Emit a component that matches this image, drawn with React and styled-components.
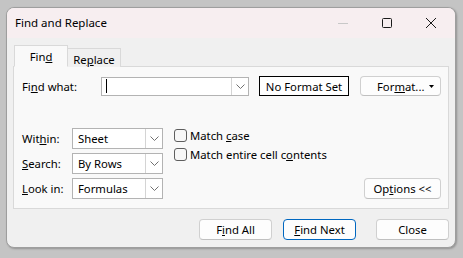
import React from "react";
import styled, { createGlobalStyle } from "styled-components";

const Global = createGlobalStyle`
  html, body {
    margin: 0;
    padding: 0;
    background: #c4c4c4;
    width: 463px;
    height: 258px;
    overflow: hidden;
  }
  body {
    font-family: "Noto Sans", "Segoe UI", sans-serif;
    font-size: 11.3px;
    color: #000;
  }
`;

const Stage = styled.div`
  padding: 7px 0 0 6px;
`;

const Window = styled.div`
  width: 448px;
  height: 239px;
  border: 1px solid #9e9e9e;
  border-radius: 8px;
  background: #f0f0f0;
  overflow: hidden;
  box-shadow: 1px 1px 2px rgba(0, 0, 0, 0.25);
  display: flex;
  flex-direction: column;
`;

const TitleBar = styled.div`
  height: 30px;
  background: #f7eef0;
  display: flex;
  align-items: center;
  padding: 0 2px 0 8px;
`;

const Title = styled.div`
  flex: 1;
  line-height: 30px;
  font-size: 11.5px;
`;

const CapButton = styled.div`
  width: 44px;
  height: 30px;
  display: flex;
  align-items: center;
  justify-content: center;
`;

const Body = styled.div`
  padding: 7px 6px 0 6px;
  display: flex;
  flex-direction: column;
`;

const TabRow = styled.div`
  display: flex;
  align-items: flex-end;
  height: 22px;
  padding-left: 1px;
  position: relative;
  z-index: 1;
`;

const Tab = styled.div`
  width: ${(p) => (p.$active ? "54px" : "53px")};
  height: ${(p) => (p.$active ? "22px" : "19px")};
  box-sizing: border-box;
  border: 1px solid #d9d9d9;
  border-bottom: ${(p) => (p.$active ? "1px solid #f9f9f9" : "none")};
  border-left: ${(p) => (p.$active ? "1px solid #d9d9d9" : "none")};
  background: ${(p) => (p.$active ? "#f9f9f9" : "#f0f0f0")};
  display: flex;
  align-items: center;
  justify-content: center;
  padding-top: ${(p) => (p.$active ? "0" : "2px")};
`;

const Panel = styled.div`
  margin-top: -1px;
  height: 143px;
  border: 1px solid #d9d9d9;
  background: #f9f9f9;
  box-sizing: border-box;
  padding: 9px 7px 0 8px;
  display: flex;
  flex-direction: column;
`;

const FindRow = styled.div`
  display: flex;
  align-items: center;
  height: 20px;
`;

const Label = styled.div`
  width: ${(p) => p.$w || "50px"};
  flex: none;
`;

const Combo = styled.div`
  width: ${(p) => p.$w}px;
  height: ${(p) => p.$h}px;
  box-sizing: border-box;
  border: 1px solid #b3b3b3;
  background: #fff;
  display: flex;
  align-items: center;
  flex: none;
`;

const ComboText = styled.div`
  flex: 1;
  padding-left: 5px;
  display: flex;
  align-items: center;
`;

const Caret = styled.div`
  width: 1px;
  height: 14px;
  background: #000;
  margin-left: -1px;
`;

const Arrow = styled.div`
  width: 16px;
  align-self: stretch;
  border-left: 1px solid #d4d4d4;
  display: flex;
  align-items: center;
  justify-content: center;
`;

const FormatBox = styled.div`
  margin-left: 10px;
  width: 90px;
  height: 20px;
  box-sizing: border-box;
  border: 1px solid #000;
  background: #fff;
  display: flex;
  align-items: center;
  justify-content: center;
`;

const Button = styled.div`
  width: ${(p) => p.$w}px;
  height: ${(p) => p.$h || 21}px;
  box-sizing: border-box;
  border: 1px solid ${(p) => (p.$primary ? "#0067c0" : "#d0d0d0")};
  border-bottom-color: ${(p) => (p.$primary ? "#0067c0" : "#c0c0c0")};
  border-radius: 4px;
  background: #fdfdfd;
  display: flex;
  align-items: center;
  justify-content: center;
  flex: none;
  margin-left: ${(p) => p.$gap || 0}px;
`;

const FormatButton = styled(Button)`
  margin-left: 11px;
  justify-content: space-between;
  padding: 0 6px 0 16px;
`;

const Options = styled.div`
  margin-top: 32px;
  display: flex;
`;

const Column = styled.div`
  display: flex;
  flex-direction: column;
  gap: 4px;
`;

const SelectRow = styled.div`
  display: flex;
  align-items: center;
`;

const Checks = styled.div`
  margin-left: 11px;
  display: flex;
  flex-direction: column;
  gap: 6px;
  padding-top: 1px;
`;

const CheckRow = styled.div`
  display: flex;
  align-items: center;
  gap: 3px;
  height: 13px;
`;

const Box = styled.div`
  width: 13px;
  height: 13px;
  box-sizing: border-box;
  border: 1px solid #5e5e5e;
  border-radius: 3px;
  background: #f7f7f7;
`;

const Right = styled.div`
  flex: 1;
  display: flex;
  justify-content: flex-end;
  align-items: flex-end;
`;

const Footer = styled.div`
  display: flex;
  justify-content: flex-end;
  padding-top: 10px;
`;

const u = (s) => <u>{s}</u>;

const Chevron = () => (
  <svg width="9" height="5" viewBox="0 0 9 5">
    <path d="M0.5 0.5 L4.5 4.5 L8.5 0.5" fill="none" stroke="#707070" strokeWidth="1" />
  </svg>
);

const Select = ({ value }) => (
  <Combo $w={91} $h={21}>
    <ComboText>{value}</ComboText>
    <Arrow>
      <Chevron />
    </Arrow>
  </Combo>
);

export default function App() {
  return (
    <Stage>
      <Global />
      <Window>
        <TitleBar>
          <Title>Find and Replace</Title>
          <CapButton>
            <svg width="10" height="10" viewBox="0 0 10 10">
              <path d="M0 5.5 H10" stroke="#c8c8c8" strokeWidth="1" />
            </svg>
          </CapButton>
          <CapButton>
            <svg width="10" height="10" viewBox="0 0 10 10">
              <rect x="0.5" y="0.5" width="9" height="9" rx="1" fill="none" stroke="#1a1a1a" strokeWidth="1" />
            </svg>
          </CapButton>
          <CapButton>
            <svg width="10" height="10" viewBox="0 0 10 10">
              <path d="M0 0 L10 10 M10 0 L0 10" stroke="#1a1a1a" strokeWidth="1" />
            </svg>
          </CapButton>
        </TitleBar>
        <Body>
          <TabRow>
            <Tab $active>Fin{u("d")}</Tab>
            <Tab>Re{u("p")}lace</Tab>
          </TabRow>
          <Panel>
            <FindRow>
              <Label $w="79px">Fi{u("n")}d what:</Label>
              <Combo $w={148} $h={19}>
                <ComboText>
                  <Caret />
                </ComboText>
                <Arrow>
                  <Chevron />
                </Arrow>
              </Combo>
              <FormatBox>No Format Set</FormatBox>
              <FormatButton $w={81} $h={20}>
                <span>For{u("m")}at...</span>
                <svg width="5" height="3" viewBox="0 0 5 3">
                  <path d="M0 0 H5 L2.5 3 Z" fill="#000" />
                </svg>
              </FormatButton>
            </FindRow>
            <Options>
              <Column>
                <SelectRow>
                  <Label>Wit{u("h")}in:</Label>
                  <Select value="Sheet" />
                </SelectRow>
                <SelectRow>
                  <Label>{u("S")}earch:</Label>
                  <Select value="By Rows" />
                </SelectRow>
                <SelectRow>
                  <Label>{u("L")}ook in:</Label>
                  <Select value="Formulas" />
                </SelectRow>
              </Column>
              <Checks>
                <CheckRow>
                  <Box />
                  <span>Match {u("c")}ase</span>
                </CheckRow>
                <CheckRow>
                  <Box />
                  <span>Match entire cell c{u("o")}ntents</span>
                </CheckRow>
              </Checks>
              <Right>
                <Button $w={77}>Op{u("t")}ions &lt;&lt;</Button>
              </Right>
            </Options>
          </Panel>
          <Footer>
            <Button $w={73}>F{u("i")}nd All</Button>
            <Button $w={73} $gap={11} $primary>
              {u("F")}ind Next
            </Button>
            <Button $w={73} $gap={20}>
              Close
            </Button>
          </Footer>
        </Body>
      </Window>
    </Stage>
  );
}
